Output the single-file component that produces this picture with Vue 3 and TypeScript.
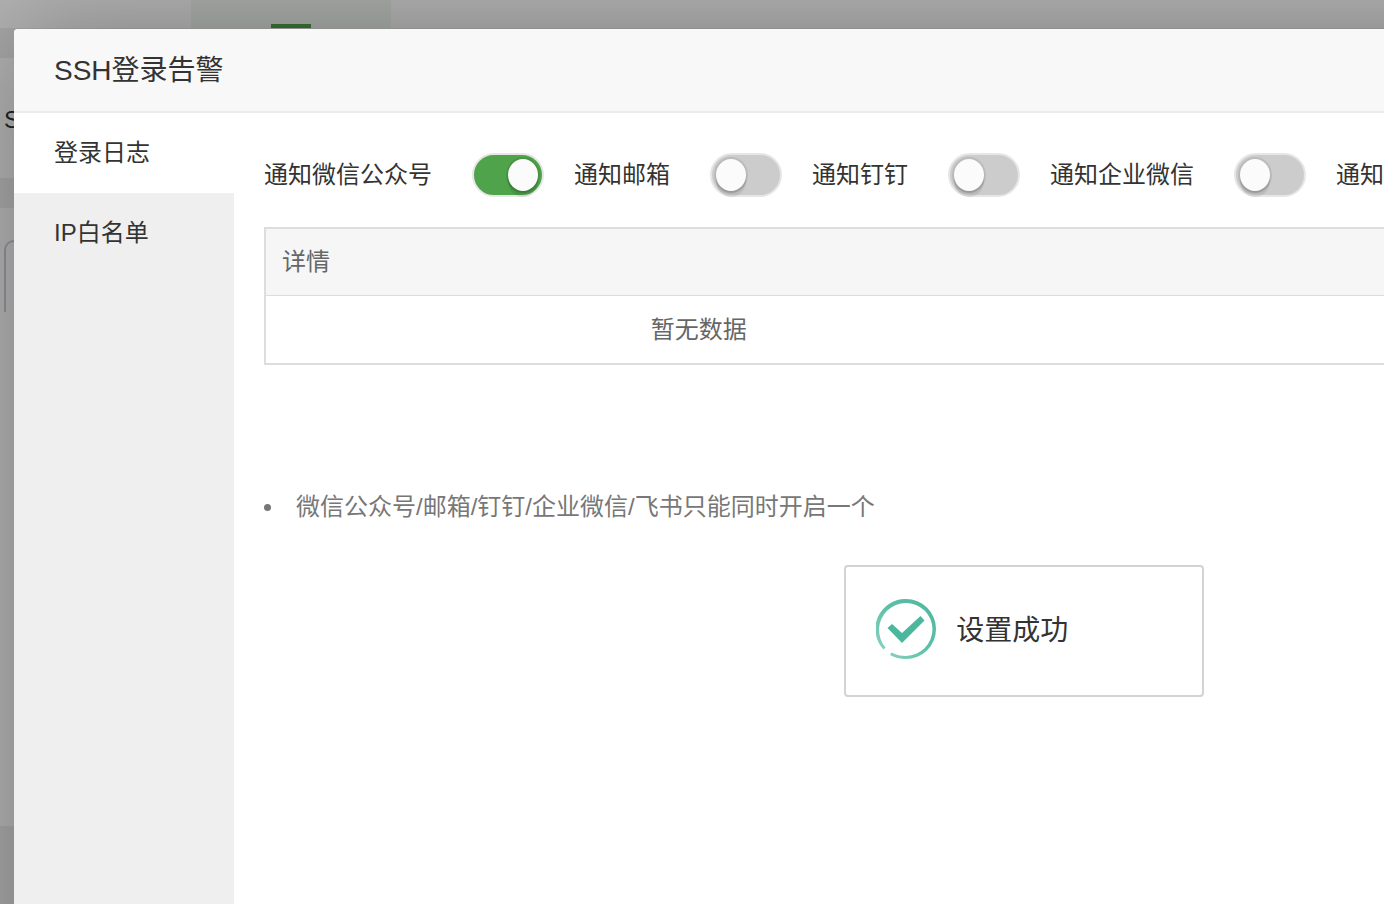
<script setup lang="ts">
import { ref } from 'vue'

interface Channel {
  id: string
  label: string
  enabled: boolean
}

const channels = ref<Channel[]>([
  { id: 'wechat', label: '通知微信公众号', enabled: true },
  { id: 'mail', label: '通知邮箱', enabled: false },
  { id: 'dingding', label: '通知钉钉', enabled: false },
  { id: 'wecom', label: '通知企业微信', enabled: false },
])

const tabs = ['登录日志', 'IP白名单']
const activeTab = ref(tabs[0])

// Only one channel may be active at a time.
function toggle(channel: Channel) {
  const next = !channel.enabled
  channels.value.forEach((c) => (c.enabled = false))
  channel.enabled = next
}
</script>

<template>
  <div class="screen">
    <div class="page">
      <div class="topbar"><div class="toptab"></div></div>
      <div class="panel summary">S</div>
      <div class="panel form"><div class="field"></div></div>
    </div>
    <div class="mask"></div>

    <section class="dialog" role="dialog" aria-labelledby="dialog-title">
      <header class="dialog-header">
        <h1 id="dialog-title">SSH登录告警</h1>
      </header>
      <div class="dialog-body">
        <nav class="tabs">
          <button
            v-for="tab in tabs"
            :key="tab"
            type="button"
            :class="['tab', { active: tab === activeTab }]"
            @click="activeTab = tab"
          >{{ tab }}</button>
        </nav>
        <main class="content">
          <div class="channels">
            <div v-for="channel in channels" :key="channel.id" class="channel">
              <label :for="channel.id">{{ channel.label }}</label>
              <input
                :id="channel.id"
                class="switch"
                type="checkbox"
                role="switch"
                :checked="channel.enabled"
                @change="toggle(channel)"
              />
            </div>
            <span class="channel-text">通知</span>
          </div>
          <table class="log">
            <thead>
              <tr><th class="detail">详情</th><th></th></tr>
            </thead>
            <tbody>
              <tr><td class="detail">暂无数据</td><td></td></tr>
            </tbody>
          </table>
          <ul class="tips">
            <li>微信公众号/邮箱/钉钉/企业微信/飞书只能同时开启一个</li>
          </ul>
        </main>
      </div>
    </section>

    <div class="toast" role="status">
      <svg class="toast-icon" viewBox="0 0 60 60" aria-hidden="true">
        <defs>
          <linearGradient id="ring" x1="0" y1="1" x2="1" y2="0">
            <stop offset="0" stop-color="#8ed6c5" />
            <stop offset="0.5" stop-color="#5fc0a8" />
            <stop offset="1" stop-color="#4db79e" />
          </linearGradient>
        </defs>
        <path
          d="M7.500 50.500A30 30 0 0 1 30 0A30 30 0 0 1 30 60Q21 60 14 56L15.500 53.500Q22 57 30 57A27 27 0 0 0 56.500 30A26.500 26.500 0 0 0 30 4A27 27 0 0 0 3 30Q3 41 9.500 48.500Z"
          fill="url(#ring)"
        />
        <path d="M11.500 29L16 25L26 34L44.500 17L48.500 21.500L26 44Z" fill="#4db79e" />
      </svg>
      <span>设置成功</span>
    </div>
  </div>
</template>

<style>
body {
  margin: 0;
}
</style>

<style scoped>
.screen {
  position: relative;
  height: 100vh;
  overflow: hidden;
  font-family: "Liberation Sans", "Noto Sans CJK SC", sans-serif;
  font-size: 24px;
  line-height: 36px;
  color: #333;
}
.page {
  height: 100%;
  background: #f0f0f0;
}
.topbar {
  height: 28px;
  margin-bottom: 30px;
  padding-left: 191px;
  background: #fff;
}
.toptab {
  box-sizing: border-box;
  display: flex;
  align-items: flex-end;
  justify-content: center;
  width: 200px;
  height: 28px;
  background: #f3f8f2;
}
.toptab::after {
  content: "";
  width: 40px;
  height: 4px;
  background: #4ea54b;
}
.panel {
  box-sizing: border-box;
  background: #fff;
  padding-left: 4px;
}
.summary {
  height: 120px;
  margin-bottom: 30px;
  padding-top: 44px;
}
.form {
  height: 618px;
  padding-top: 32px;
}
.field {
  box-sizing: border-box;
  height: 72px;
  border: 2px solid #cdcdd8;
  border-bottom: 0;
  border-radius: 10px 10px 0 0;
}
.mask {
  position: absolute;
  inset: 0;
  background: rgba(0, 0, 0, 0.3);
}
.dialog {
  position: absolute;
  top: 29px;
  left: 14px;
  right: -200px;
  bottom: -200px;
  display: flex;
  flex-direction: column;
  overflow: hidden;
  background: #fff;
  border-radius: 4px 0 0 0;
  box-shadow: 2px 2px 100px rgba(0, 0, 0, 0.3);
}
.dialog-header {
  padding: 20px 40px 18px;
  background: #f8f8f8;
  border-bottom: 2px solid #ebebeb;
}
.dialog-header h1 {
  margin: 0;
  font-size: 28px;
  font-weight: 400;
  line-height: 44px;
}
.dialog-body {
  display: flex;
  flex: 1;
}
.tabs {
  flex: none;
  width: 220px;
  background: #efefef;
}
.tab {
  display: block;
  width: 100%;
  height: 80px;
  padding: 0 40px;
  border: 0;
  background: transparent;
  color: inherit;
  font: inherit;
  text-align: left;
}
.tab.active {
  background: #fff;
}
.content {
  flex: 1;
  min-width: 0;
  padding: 40px 200px 0 30px;
}
.channels {
  display: flex;
  align-items: center;
  gap: 30px;
  height: 44px;
  margin-bottom: 30px;
  white-space: nowrap;
}
.channel {
  display: flex;
  align-items: center;
  gap: 40px;
}
.switch {
  position: relative;
  appearance: none;
  box-sizing: border-box;
  flex: none;
  width: 72px;
  height: 44px;
  margin: 0;
  border: 2px solid #e6e6e6;
  border-radius: 22px;
  background: #ccc;
}
.switch::after {
  content: "";
  position: absolute;
  top: 4px;
  left: 4px;
  width: 30px;
  height: 32px;
  border-radius: 50%;
  background: #fbfbfb;
  box-shadow: 0 0 0 2px rgba(0, 0, 0, 0.08), 0 6px 0 0 rgba(0, 0, 0, 0.08), 0 2px 2px rgba(0, 0, 0, 0.12);
}
.switch:checked {
  background: #4fa34a;
}
.switch:checked::after {
  left: 34px;
}
.log {
  width: 100%;
  table-layout: fixed;
  border: 2px solid #ddd;
  border-right: 0;
  border-spacing: 0;
  color: #666;
}
.log th,
.log td {
  height: 66px;
  padding: 0;
  font-weight: 400;
}
.log td {
  height: 67px;
}
.log th {
  background: #f6f6f6;
  border-bottom: 1px solid #ddd;
}
.log .detail {
  width: 76%;
}
.log th.detail {
  padding-left: 16px;
  text-align: left;
}
.log td.detail {
  text-align: center;
}
.tips {
  margin: 124px 0 0;
  padding: 0;
  list-style: none;
  color: #777;
}
.tips li {
  display: flex;
  align-items: center;
  gap: 25px;
}
.tips li::before {
  content: "";
  width: 7px;
  height: 7px;
  border-radius: 50%;
  background: #777;
}
.toast {
  position: absolute;
  top: 565px;
  left: 61%;
  box-sizing: border-box;
  display: flex;
  align-items: flex-start;
  gap: 20px;
  width: 360px;
  height: 132px;
  padding: 32px 30px;
  border: 2px solid #d3d3d3;
  border-radius: 4px;
  background: #fff;
  font-size: 28px;
  line-height: 64px;
}
.toast-icon {
  flex: none;
  width: 60px;
  height: 60px;
}
</style>
